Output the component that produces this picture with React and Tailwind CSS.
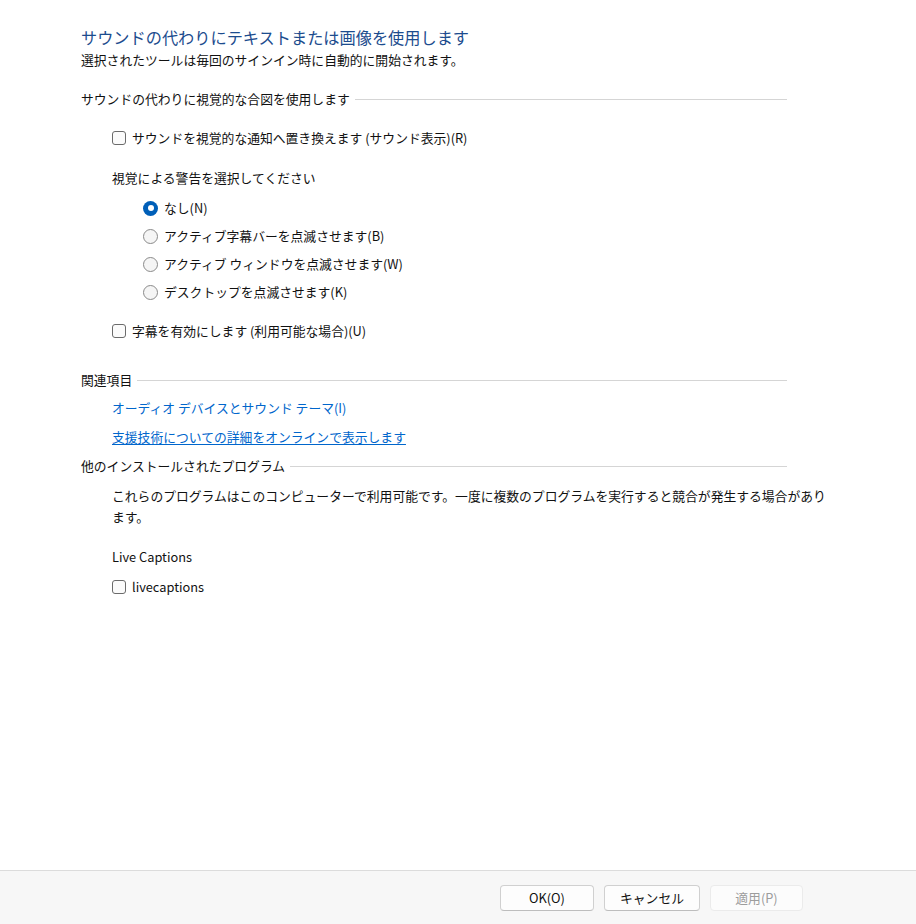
import React from "react";

const font = { fontFamily: '"Noto Sans CJK JP", "Noto Sans", sans-serif' };

function Checkbox({ label }) {
  return (
    <div className="flex h-[18px] items-center">
      <span className="mr-[6px] box-border h-[14px] w-[14px] rounded-[3px] border border-[#6b6b6b] bg-[#fbfbfb]" />
      <span>{label}</span>
    </div>
  );
}

function Radio({ label, checked }) {
  return (
    <div className="flex h-[28px] items-center">
      {checked ? (
        <span className="mr-[6px] flex h-[15px] w-[15px] items-center justify-center rounded-full bg-[#005fb8]">
          <span className="h-[6px] w-[6px] rounded-full bg-white" />
        </span>
      ) : (
        <span className="mr-[6px] box-border h-[15px] w-[15px] rounded-full border border-[#8a8a8a] bg-[#f5f5f5]" />
      )}
      <span>{label}</span>
    </div>
  );
}

function SectionHeader({ label, className }) {
  return (
    <div className={"flex h-[18px] items-center " + (className || "")}>
      <span className="whitespace-nowrap">{label}</span>
      <span className="ml-[5px] h-px flex-1 bg-[#d5d5d5]" />
    </div>
  );
}

export default function App() {
  return (
    <div
      className="flex h-[924px] w-[916px] flex-col bg-white text-[12.8px] leading-[18px] text-[#111]"
      style={font}
    >
      <div className="flex-1 pl-[81px] pr-[129px] pt-[26px]">
        <div className="h-[22px] text-[16.2px] leading-[22px] text-[#1c4c8e]">
          サウンドの代わりにテキストまたは画像を使用します
        </div>
        <div className="mt-[3px] h-[18px]">
          選択されたツールは毎回のサインイン時に自動的に開始されます。
        </div>

        <SectionHeader label="サウンドの代わりに視覚的な合図を使用します" className="mt-[21px]" />

        <div className="pl-[31px]">
          <div className="mt-[21px]">
            <Checkbox label="サウンドを視覚的な通知へ置き換えます (サウンド表示)(R)" />
          </div>
          <div className="mt-[22px] h-[18px]">視覚による警告を選択してください</div>
          <div className="mt-[7px] pl-[31px]">
            <Radio label="なし(N)" checked />
            <Radio label="アクティブ字幕バーを点滅させます(B)" />
            <Radio label="アクティブ ウィンドウを点滅させます(W)" />
            <Radio label="デスクトップを点滅させます(K)" />
          </div>
          <div className="mt-[16px]">
            <Checkbox label="字幕を有効にします (利用可能な場合)(U)" />
          </div>
        </div>

        <SectionHeader label="関連項目" className="mt-[31px]" />
        <div className="pl-[31px]">
          <div className="mt-[10px] h-[18px] text-[#0066cc]">
            オーディオ デバイスとサウンド テーマ(I)
          </div>
          <div className="mt-[11px] h-[18px]">
            <span className="text-[#0066cc] underline underline-offset-2">
              支援技術についての詳細をオンラインで表示します
            </span>
          </div>
        </div>

        <SectionHeader label="他のインストールされたプログラム" className="mt-[11px]" />
        <div className="pl-[31px]">
          <p className="mt-[10px] w-[740px] leading-[21px]">
            これらのプログラムはこのコンピューターで利用可能です。一度に複数のプログラムを実行すると競合が発生する場合があり
            <br />
            ます。
          </p>
          <div className="mt-[21px] h-[18px]">Live Captions</div>
          <div className="mt-[12px]">
            <Checkbox label="livecaptions" />
          </div>
        </div>
      </div>

      <div className="flex h-[54px] items-center justify-end gap-[10px] border-t border-[#dcdcdc] bg-[#f7f7f7] pr-[113px]">
        <button className="h-[26px] w-[94px] rounded-[4px] border border-[#d0d0d0] border-b-[#bdbdbd] bg-[#fdfdfd] text-[12.8px] text-[#111]">
          OK(O)
        </button>
        <button className="h-[26px] w-[96px] rounded-[4px] border border-[#d0d0d0] border-b-[#bdbdbd] bg-[#fdfdfd] text-[12.8px] text-[#111]">
          キャンセル
        </button>
        <button className="h-[26px] w-[93px] rounded-[4px] border border-[#ebebeb] bg-[#fcfcfc] text-[12.8px] text-[#9d9d9d]">
          適用(P)
        </button>
      </div>
    </div>
  );
}
